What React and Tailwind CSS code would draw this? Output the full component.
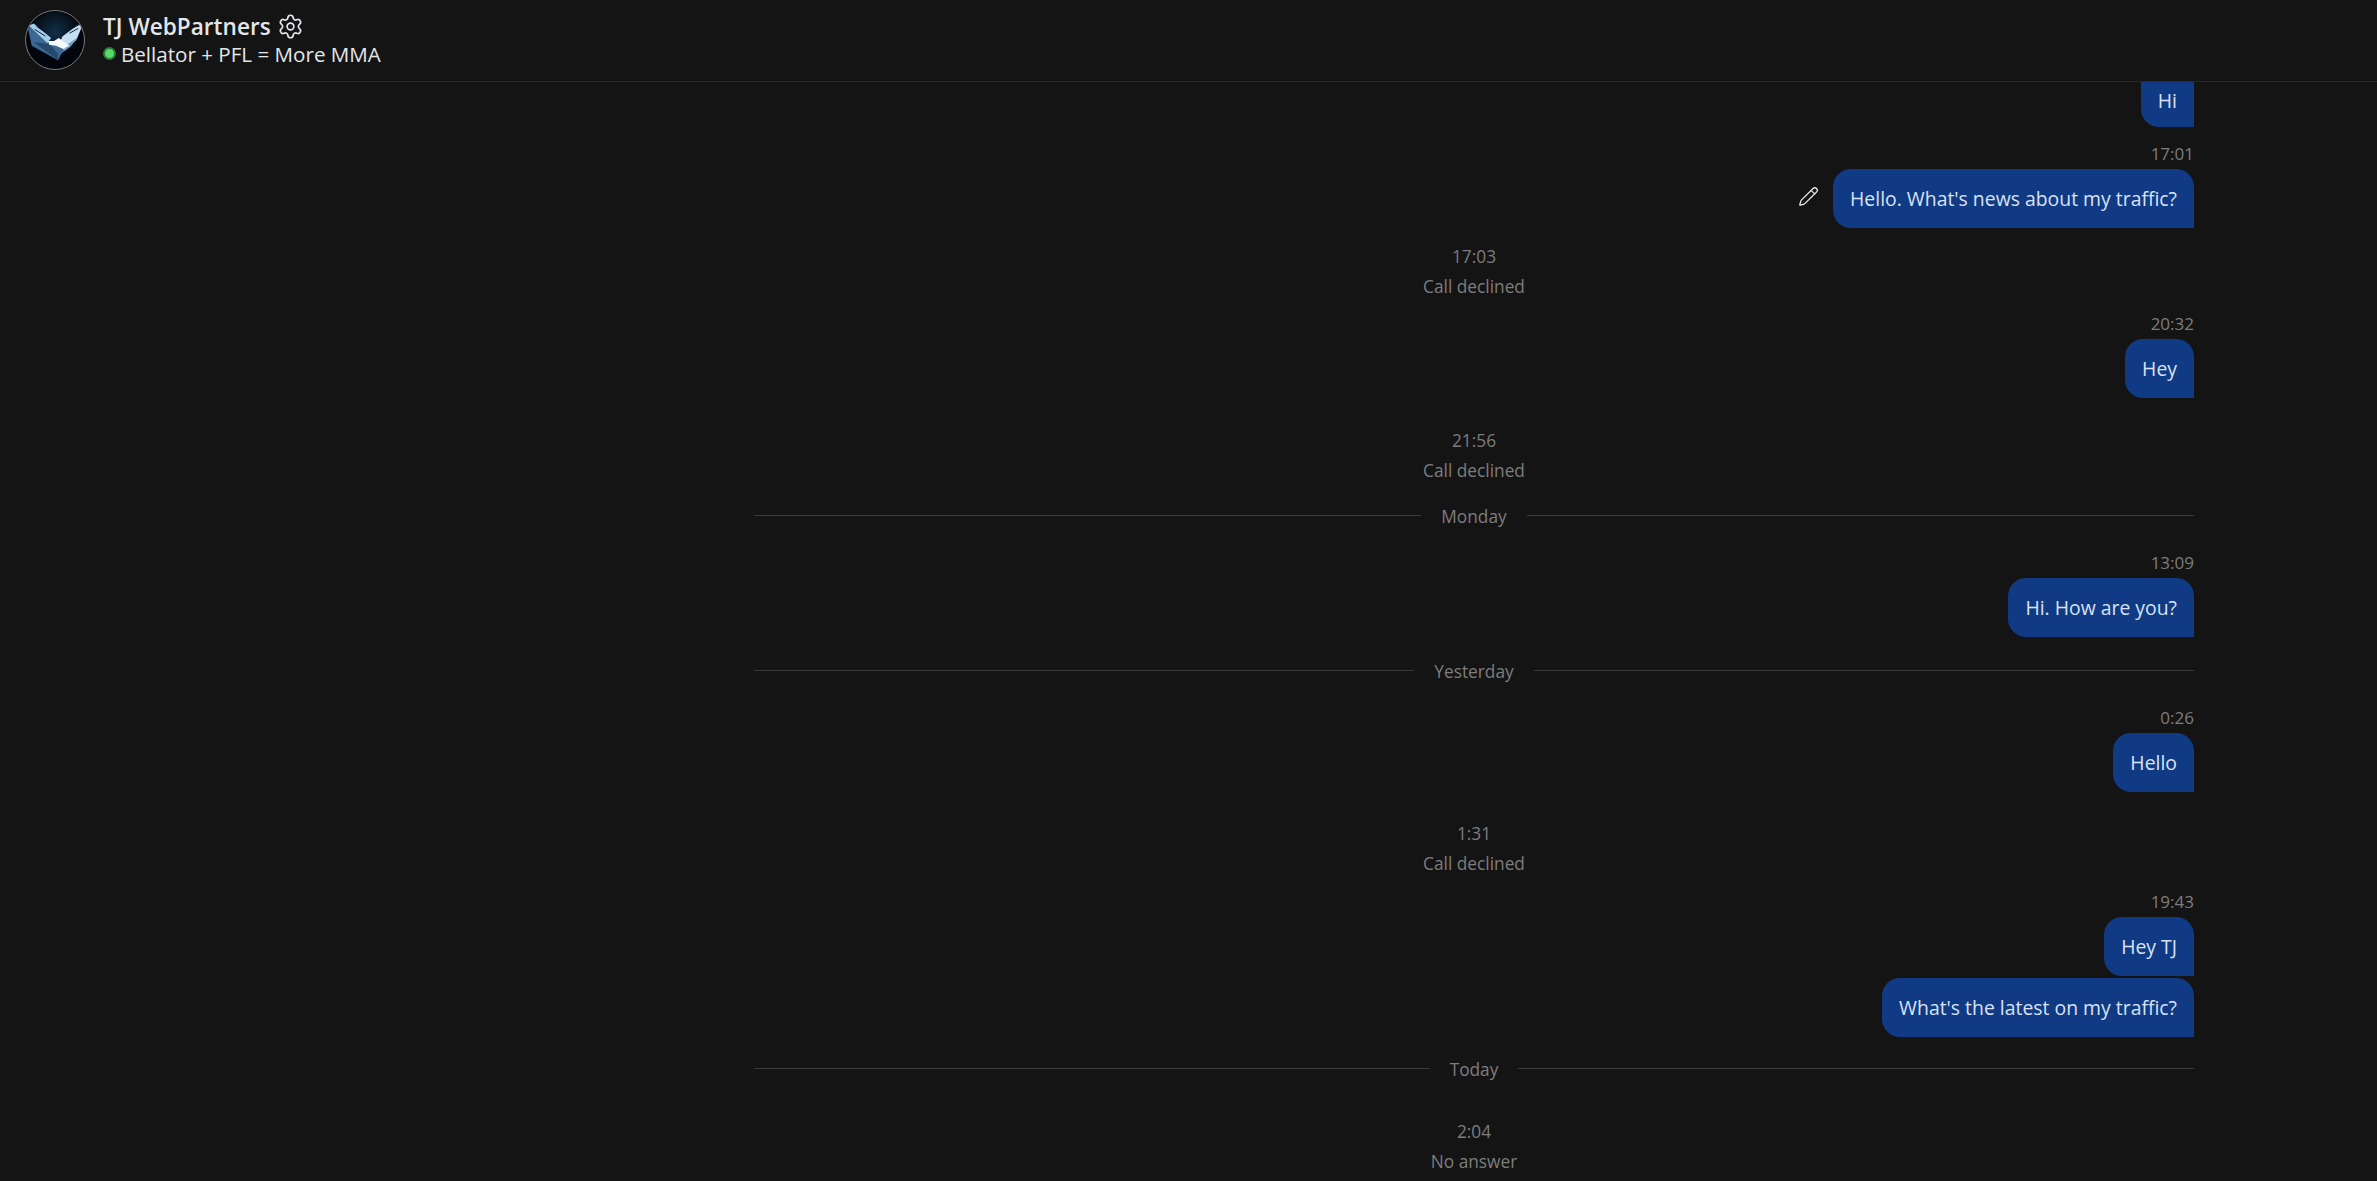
import React from "react";
import { Settings, Pencil } from "lucide-react";

function Logo() {
  return (
    <svg viewBox="0 0 60 60" className="w-[60px] h-[60px] shrink-0 rounded-full border border-[#77797c] bg-[#02060c]">
      <defs>
        <radialGradient id="glow" cx="50%" cy="35%" r="45%">
          <stop offset="0%" stopColor="#123049" />
          <stop offset="100%" stopColor="#02060c" />
        </radialGradient>
      </defs>
      <circle cx="30" cy="30" r="29" fill="url(#glow)" />
      <path d="M2 18 L4 14 L24 31 L40 38 L33 51 L6 36 Z" fill="#3a6a94" />
      <path d="M8 32 L24 34 L33 44 L33 51 Z" fill="#24496c" />
      <path d="M3 15 L8 13 L26 28 L22 33 Z" fill="#a3cdea" />
      <path d="M58 16 L54 14 L38 26 L34 34 L40 41 L52 30 Z" fill="#c5e0f2" />
      <path d="M46 37 L54 27 L44 34 L36 44 Z" fill="#6d9cc2" />
      <path d="M23 31 L29 31 L34 28 L38 31 L45 36 L38 39 L31 36 L24 35 Z" fill="#f6f9fb" />
      <path d="M9 19 L20 26 M11 16 L20 22" stroke="#0b1d30" strokeWidth="1" />
      <path d="M46 19 L55 14 M45 23 L54 18" stroke="#0b1d30" strokeWidth="1" />
    </svg>
  );
}

function Time({ children }) {
  return <div className="text-[17px] leading-[20px] text-[#7d7d7d] text-right">{children}</div>;
}

function Bubble({ children, className = "" }) {
  return (
    <div className={`bg-[#103a84] text-[#d8e2f3] text-[19.4px] leading-[24px] px-[17px] rounded-l-[18px] rounded-tr-[18px] h-[59px] flex items-center ${className}`}>
      {children}
    </div>
  );
}

function Outgoing({ time, className = "", children }) {
  return (
    <div className={`flex flex-col items-end ${className}`}>
      <Time>{time}</Time>
      <div className="mt-[5px] flex flex-col items-end">{children}</div>
    </div>
  );
}

function CallEntry({ time, label, className = "" }) {
  return (
    <div className={`flex flex-col items-center text-[#7d7d7d] text-[17.3px] leading-[30px] ${className}`}>
      <div>{time}</div>
      <div>{label}</div>
    </div>
  );
}

function DayDivider({ label, className = "" }) {
  return (
    <div className={`flex items-center gap-5 text-[17.3px] leading-[24px] text-[#7d7d7d] ${className}`}>
      <div className="flex-1 h-px bg-[#3a3a3a]" />
      <div className="translate-y-[2px]">{label}</div>
      <div className="flex-1 h-px bg-[#3a3a3a]" />
    </div>
  );
}

export default function App() {
  return (
    <div className="h-screen flex flex-col bg-[#141414] overflow-hidden font-['Open_Sans','Noto_Sans',sans-serif]">
      <header className="h-[82px] shrink-0 border-b border-[#2a2a2a] flex items-center pl-[25px] pb-[2px] gap-[18px]">
        <Logo />
        <div className="flex flex-col">
          <div className="flex items-center gap-[6px] text-[#e4e6ea] text-[22.6px] leading-[28px] font-semibold">
            <span>TJ WebPartners</span>
            <Settings size={27} strokeWidth={1.5} className="text-[#e4e6ea]" />
          </div>
          <div className="flex items-center gap-[5px] text-[#e4e6ea] text-[20.6px] leading-[26px]">
            <span className="w-[13px] h-[13px] rounded-full bg-[#57d968] border-2 border-[#2f7a3a]" />
            <span>Bellator + PFL = More MMA</span>
          </div>
        </div>
      </header>

      <main className="flex-1 overflow-hidden">
        <div className="w-[1440px] ml-[754px]">
          <div className="flex justify-end">
            <Bubble className="!h-[45px] rounded-tl-none rounded-tr-none pb-[8px]">Hi</Bubble>
          </div>

          <Outgoing time="17:01" className="mt-[17px]">
            <div className="flex items-center gap-[14px]">
              <Pencil size={21} strokeWidth={1.5} className="text-[#e4e6ea] -translate-y-[2px]" />
              <Bubble>Hello. What's news about my traffic?</Bubble>
            </div>
          </Outgoing>

          <CallEntry time="17:03" label="Call declined" className="mt-[14px]" />

          <Outgoing time="20:32" className="mt-[12px]">
            <Bubble>Hey</Bubble>
          </Outgoing>

          <CallEntry time="21:56" label="Call declined" className="mt-[28px]" />

          <DayDivider label="Monday" className="mt-[17px]" />

          <Outgoing time="13:09" className="mt-[26px]">
            <Bubble>Hi. How are you?</Bubble>
          </Outgoing>

          <DayDivider label="Yesterday" className="mt-[21px]" />

          <Outgoing time="0:26" className="mt-[26px]">
            <Bubble>Hello</Bubble>
          </Outgoing>

          <CallEntry time="1:31" label="Call declined" className="mt-[27px]" />

          <Outgoing time="19:43" className="mt-[13px]">
            <Bubble>Hey TJ</Bubble>
            <Bubble className="mt-[2px]">What's the latest on my traffic?</Bubble>
          </Outgoing>

          <DayDivider label="Today" className="mt-[19px]" />

          <CallEntry time="2:04" label="No answer" className="mt-[37px]" />
        </div>
      </main>
    </div>
  );
}
